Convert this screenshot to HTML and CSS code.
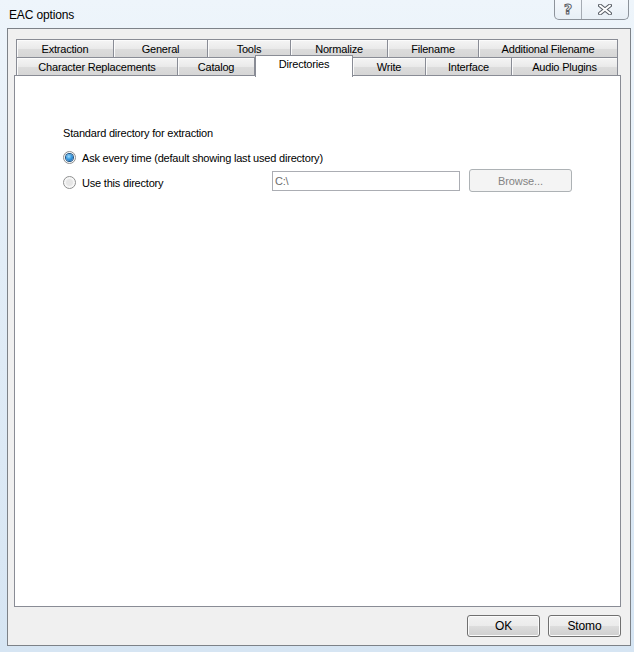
FILE: index.html
```html
<!DOCTYPE html>
<html lang="en">
<head>
    <meta charset="UTF-8">
    <title>EAC options</title>
    <link rel="stylesheet" href="styles.css">
</head>
<body>
    <div class="window">
        <div class="titlebar">
            <span class="title">EAC options</span>
            <div class="caption-buttons">
                <button class="cap help" type="button"><span>?</span></button>
                <button class="cap close" type="button">
                    <svg width="14" height="11" viewBox="0 0 14 11">
                        <path d="M2 1.5 L12 9.5 M12 1.5 L2 9.5" stroke="#5b6068" stroke-width="4" stroke-linecap="round"/>
                        <path d="M2 1.5 L12 9.5 M12 1.5 L2 9.5" stroke="#ffffff" stroke-width="2" stroke-linecap="round"/>
                    </svg>
                </button>
            </div>
        </div>

        <div class="client">
            <div class="tabs">
                <div class="tab-row row-back">
                    <div class="tab">Extraction</div>
                    <div class="tab">General</div>
                    <div class="tab">Tools</div>
                    <div class="tab">Normalize</div>
                    <div class="tab">Filename</div>
                    <div class="tab">Additional Filename</div>
                </div>
                <div class="tab-row row-front">
                    <div class="tab">Character Replacements</div>
                    <div class="tab">Catalog</div>
                    <div class="tab active">Directories</div>
                    <div class="tab">Write</div>
                    <div class="tab">Interface</div>
                    <div class="tab">Audio Plugins</div>
                </div>
            </div>

            <div class="panel">
                <div class="group">
                    <div class="row">Standard directory for extraction</div>
                    <div class="row">
                        <label class="radio-label"><span class="radio checked"></span>Ask every time (default showing last used directory)</label>
                    </div>
                    <div class="row">
                        <label class="radio-label fixed"><span class="radio"></span>Use this directory</label>
                        <div class="path-field">
                            <input class="text-input" type="text" value="C:\" disabled>
                            <button class="btn browse" type="button" disabled>Browse...</button>
                        </div>
                    </div>
                </div>
            </div>

            <div class="footer">
                <button class="btn" type="button">OK</button>
                <button class="btn" type="button">Stomo</button>
            </div>
        </div>
    </div>
</body>
</html>
```

FILE: styles.css
```css
body {
    margin: 0;
    font-family: "Liberation Sans", Arial, sans-serif;
    font-size: 11px;
    color: #000;
    background: #dbe8f4;
}

.window {
    width: 634px;
    height: 652px;
    display: flex;
    flex-direction: column;
    background: linear-gradient(to bottom, #eef5fb 0%, #e2edf7 40%, #d6e5f3 100%);
    box-sizing: border-box;
}

.titlebar {
    height: 28px;
    display: flex;
    justify-content: space-between;
    align-items: flex-start;
    padding: 0 5px 0 9px;
    flex-shrink: 0;
}

.title {
    margin-top: 7px;
    font-size: 12px;
    line-height: 16px;
    letter-spacing: -0.15px;
    color: #000;
}

.caption-buttons {
    display: flex;
    border: 1px solid #8d939b;
    border-top: none;
    border-radius: 0 0 5px 5px;
    overflow: hidden;
    background: linear-gradient(to bottom, #f4f8fc, #e8eff6);
}

.cap {
    height: 19px;
    border: none;
    background: transparent;
    padding: 0;
    display: flex;
    align-items: center;
    justify-content: center;
}

.cap.help {
    width: 27px;
    border-right: 1px solid #a5abb3;
    font-family: "DejaVu Sans", sans-serif;
    font-size: 14px;
    font-weight: bold;
    color: #fff;
    -webkit-text-stroke: 1px #5b6068;
    padding-bottom: 1px;
}

.cap.close {
    width: 46px;
}

.client {
    flex: 1;
    margin: 0 3px 6px 7px;
    border: 1px solid #7d8288;
    background: #f0f0f0;
    padding: 10px 9px 0 6px;
    display: flex;
    flex-direction: column;
    letter-spacing: -0.2px;
}

.tabs {
    margin-left: 2px;
    width: 602px;
}

.tab-row {
    display: grid;
    height: 18px;
}

.row-back {
    grid-template-columns: 98px 94px 83px 97px 91px 139px;
}

.row-front {
    grid-template-columns: 162px 77px 98px 73px 86px 106px;
}

.tab {
    border-top: 1px solid #898c95;
    border-right: 1px solid #898c95;
    background: linear-gradient(to bottom, #f5f5f5, #e9e9e9 50%, #dcdcdc 51%, #d5d5d5);
    box-shadow: inset 1px 1px 0 #fbfbfb;
    line-height: 17px;
    padding-top: 1px;
    text-align: center;
    white-space: nowrap;
}

.tab:first-child {
    border-left: 1px solid #898c95;
}

.tab.active {
    position: relative;
    z-index: 1;
    margin: -2px 0 -1px 0;
    padding: 0 0 4px 0;
    border-left: 1px solid #898c95;
    background: #fff;
    box-shadow: none;
}

.panel {
    flex: 1;
    border: 1px solid #898c95;
    background: #fff;
    padding: 44px 0 0 48px;
}

.row {
    height: 25px;
    display: flex;
    align-items: center;
}

.radio-label {
    display: flex;
    align-items: center;
    gap: 6px;
}

.radio-label.fixed {
    width: 209px;
}

.radio {
    width: 11px;
    height: 11px;
    border-radius: 50%;
    border: 1px solid #8e8f8f;
    background: radial-gradient(circle at 50% 50%, #e6e6e6 0, #e6e6e6 3px, #f4f4f4 4px, #fdfdfd 6px);
    display: flex;
    align-items: center;
    justify-content: center;
}

.radio.checked::after {
    content: "";
    width: 7px;
    height: 7px;
    border-radius: 50%;
    background: radial-gradient(circle at 40% 35%, #9fdcfd 0, #3a9be0 45%, #0e58a8 100%);
    box-shadow: 0 0 0 1px #1c5180;
}

.path-field {
    display: flex;
    align-items: center;
    gap: 9px;
    margin-bottom: 4px;
}

.text-input {
    width: 188px;
    height: 20px;
    box-sizing: border-box;
    border: 1px solid #abadb3;
    background: #fff;
    padding: 0 2px;
    font-family: inherit;
    font-size: 11px;
    letter-spacing: -0.2px;
    color: #6d6d6d;
}

.footer {
    height: 38px;
    display: flex;
    justify-content: flex-end;
    align-items: center;
    gap: 8px;
}

.btn {
    width: 73px;
    height: 22px;
    border: 1px solid #707070;
    border-radius: 3px;
    background: linear-gradient(to bottom, #f2f2f2, #ebebeb 50%, #dddddd 51%, #cfcfcf);
    box-shadow: inset 0 0 0 1px #fbfbfb;
    font-family: inherit;
    font-size: 12px;
    letter-spacing: -0.1px;
    color: #000;
    padding: 0;
}

.btn.browse {
    width: 103px;
    height: 23px;
    border-color: #adb2b5;
    background: #f4f4f4;
    box-shadow: none;
    font-size: 11px;
    color: #838383;
}
```
